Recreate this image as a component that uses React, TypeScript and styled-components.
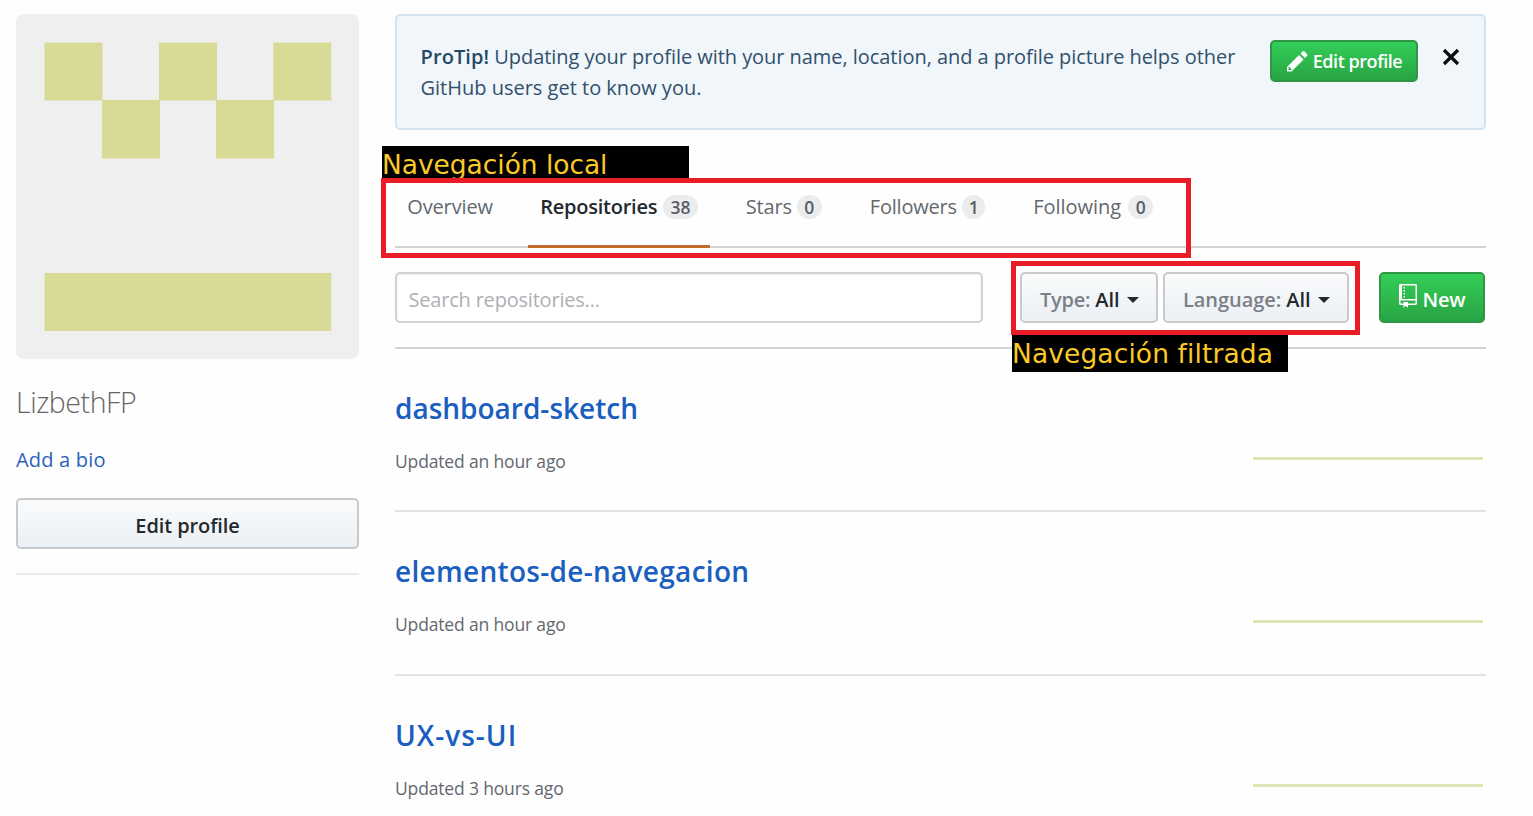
import React from "react";
import styled, { createGlobalStyle } from "styled-components";

const GlobalStyle = createGlobalStyle`
  * { box-sizing: border-box; }
  body {
    margin: 0;
    background: #fefefe;
    color: #24292e;
    font-family: "Open Sans", "Noto Sans", sans-serif;
    font-size: 20px;
    overflow: hidden;
  }
`;

const Page = styled.div`
  position: relative;
  display: flex;
  gap: 36px;
  width: 1533px;
  height: 816px;
  padding: 14px 47px 0 16px;
  overflow: hidden;
`;

const Text = styled.span<{ $track?: number }>`
  white-space: nowrap;
  letter-spacing: ${(p) => p.$track ?? 0}px;
`;

/* Sidebar */
const Sidebar = styled.aside`
  width: 343px;
  flex: none;
`;

const Avatar = styled.svg`
  display: block;
  width: 343px;
  height: 345px;
  border-radius: 8px;
  background: #efefef;
`;

const UserName = styled.h1`
  margin: 21px 0 0;
  height: 44px;
  line-height: 44px;
  font-size: 28.5px;
  font-weight: 300;
  color: #666;
`;

const BioLink = styled.a`
  display: block;
  margin-top: 20px;
  height: 32px;
  line-height: 32px;
  color: #2b62b8;
`;

const ProfileButton = styled.button`
  display: flex;
  align-items: center;
  justify-content: center;
  width: 100%;
  height: 51px;
  margin: 22px 0 24px;
  padding: 4px 0 0;
  border: 2px solid #c5c9cc;
  border-radius: 5px;
  background: linear-gradient(#fafbfc, #ebf0f4);
  font: 600 20px "Open Sans", sans-serif;
  color: #24292e;
`;

const SideRule = styled.div`
  height: 2px;
  background: #e8e9ea;
`;

/* Main column */
const Main = styled.main`
  width: 1091px;
  flex: none;
`;

const Banner = styled.section`
  display: flex;
  align-items: flex-start;
  height: 116px;
  padding: 24px 24px 0 23.5px;
  border: 2px solid #d3e3ef;
  border-radius: 5px;
  background: #f0f6fa;
  color: #32506c;
`;

const BannerCopy = styled.p`
  display: flex;
  flex-direction: column;
  width: 849.5px;
  margin: 1px 0 0;
  line-height: 31px;
`;

const Strong = styled.strong`
  font-weight: 600;
  letter-spacing: 0.1px;
  color: #264a66;
`;

const GreenButton = styled.button<{ $w: number; $h: number; $size: number; $gap: number }>`
  display: flex;
  align-items: center;
  justify-content: center;
  flex: none;
  gap: ${(p) => p.$gap}px;
  width: ${(p) => p.$w}px;
  height: ${(p) => p.$h}px;
  padding: 0;
  border: 2px solid #2f9645;
  border-radius: 5px;
  background: linear-gradient(#34ce57, #28a444);
  color: #fff;
  font: 600 ${(p) => p.$size}px "Open Sans", sans-serif;
`;

const PencilIcon = styled.svg`
  margin: 0 0 1px 1px;
`;

const RepoIcon = styled.svg`
  margin-bottom: 4px;
`;

const NewLabel = styled(Text)`
  padding-top: 3px;
`;

const CloseIcon = styled.svg`
  margin: 8px 0 0 24px;
`;

const Tabs = styled.nav`
  display: flex;
  height: 104px;
  margin-top: 14px;
  border-bottom: 2px solid #d1d3d4;
`;

const Tab = styled.a<{ $w: number; $mr?: number; $active?: boolean }>`
  display: flex;
  align-items: flex-start;
  width: ${(p) => p.$w}px;
  height: 104px;
  margin-right: ${(p) => p.$mr ?? 0}px;
  padding: 51px 0 0 12.3px;
  line-height: 24px;
  border-bottom: 3px solid ${(p) => (p.$active ? "#c2692c" : "transparent")};
  color: ${(p) => (p.$active ? "#24292e" : "#63686e")};
  font-weight: ${(p) => (p.$active ? 600 : 400)};
`;

const TabLabel = styled.span<{ $w: number; $track: number }>`
  width: ${(p) => p.$w}px;
  white-space: nowrap;
  letter-spacing: ${(p) => p.$track}px;
`;

const Counter = styled.span<{ $w: number }>`
  width: ${(p) => p.$w}px;
  height: 24px;
  border-radius: 12px;
  background: #ebecee;
  color: #595e64;
  font-size: 17.5px;
  font-weight: 600;
  text-align: center;
`;

const Filters = styled.div`
  display: flex;
  height: 101px;
  padding-top: 24px;
  border-bottom: 2px solid #d1d3d4;
`;

const SearchBox = styled.div`
  width: 588px;
  height: 51px;
  margin-right: 37px;
  padding: 0 0 0 11.5px;
  border: 2px solid #d0d2d5;
  border-radius: 5px;
  background: #fff;
  box-shadow: inset 0 1px 2px rgba(27, 31, 35, 0.08);
  line-height: 51px;
  color: #adb0b4;
`;

const SelectButton = styled.button<{ $w: number; $mr: number }>`
  display: flex;
  align-items: center;
  gap: 5px;
  width: ${(p) => p.$w}px;
  height: 51px;
  margin-right: ${(p) => p.$mr}px;
  padding: 4px 0 0 18px;
  border: 2px solid #c8cacc;
  border-radius: 5px;
  background: linear-gradient(#fafbfc, #ebf0f5);
  font: 600 20px "Open Sans", sans-serif;
  color: #24292e;
`;

const Muted = styled(Text)`
  color: #7b8086;
`;

const Caret = styled.span`
  margin-left: 2px;
  border: 6px solid transparent;
  border-top-color: #24292e;
  border-bottom: 0;
`;

const Repo = styled.article<{ $h: number }>`
  display: flex;
  justify-content: space-between;
  height: ${(p) => p.$h}px;
  padding-top: 37px;
  border-bottom: 2px solid #e2e3e4;
`;

const RepoName = styled.h2`
  margin: 0;
  height: 44px;
  line-height: 44px;
  font-size: 28px;
  font-weight: 600;
  color: #1a5fbf;
`;

const Updated = styled.div`
  margin-top: 17px;
  height: 28px;
  line-height: 28px;
  font-size: 17.5px;
  color: #63686e;
`;

const Activity = styled.div`
  width: 230px;
  height: 3px;
  margin: 71px 3px 0 0;
  background: #dce6b8;
`;

/* Annotations laid over the page */
const Frame = styled.div<{ $x: number; $y: number; $w: number; $h: number }>`
  position: absolute;
  left: ${(p) => p.$x}px;
  top: ${(p) => p.$y}px;
  width: ${(p) => p.$w}px;
  height: ${(p) => p.$h}px;
  border: 5px solid #e91d27;
`;

const Caption = styled.div<{ $x: number; $y: number; $w: number; $h: number; $track: number }>`
  position: absolute;
  left: ${(p) => p.$x}px;
  top: ${(p) => p.$y}px;
  width: ${(p) => p.$w}px;
  height: ${(p) => p.$h}px;
  line-height: 38px;
  background: #000;
  color: #fbc926;
  font-family: "DejaVu Sans", sans-serif;
  font-size: 26.5px;
  letter-spacing: ${(p) => p.$track}px;
  white-space: nowrap;
`;

const tabs = [
  { label: "Overview", w: 133, lw: 86, track: -0.15 },
  { label: "Repositories", w: 182, mr: 23.5, lw: 122.7, track: -0.25, count: "38", cw: 35, active: true },
  { label: "Stars", w: 124, lw: 51, track: -0.2, count: "0", cw: 25 },
  { label: "Followers", w: 163.5, lw: 92.5, track: -0.2, count: "1", cw: 23 },
  { label: "Following", w: 150, lw: 95, track: -0.05, count: "0", cw: 25 },
];

const repos = [
  { name: "dashboard-sketch", updated: "Updated an hour ago", h: 163, track: 0 },
  { name: "elementos-de-navegacion", updated: "Updated an hour ago", h: 164, track: 0.3 },
  { name: "UX-vs-UI", updated: "Updated 3 hours ago", h: 164, track: 1 },
];

const cells = [
  [28.5, 28.5, 58, 58],
  [143, 28.5, 58, 58],
  [257.3, 28.5, 58, 58],
  [86, 86, 58, 58.5],
  [200, 86, 58, 58.5],
  [28.5, 259, 286.8, 58],
];

export default function App() {
  return (
    <Page>
      <GlobalStyle />
      <Sidebar>
        <Avatar viewBox="0 0 343 345">
          {cells.map(([x, y, w, h]) => (
            <rect key={`${x}-${y}`} x={x} y={y} width={w} height={h} fill="#d8db96" />
          ))}
        </Avatar>
        <UserName><Text $track={-0.45}>LizbethFP</Text></UserName>
        <BioLink><Text $track={0.2}>Add a bio</Text></BioLink>
        <ProfileButton><Text $track={-0.1}>Edit profile</Text></ProfileButton>
        <SideRule />
      </Sidebar>

      <Main>
        <Banner>
          <BannerCopy>
            <Text $track={-0.05}>
              <Strong>ProTip!</Strong> Updating your profile with your name, location, and a profile picture helps other
            </Text>
            <Text>GitHub users get to know you.</Text>
          </BannerCopy>
          <GreenButton $w={148} $h={42} $size={18} $gap={5}>
            <PencilIcon width="21" height="24" viewBox="0 0 14 16" fill="#fff">
              <path d="M0 12v3h3l8-8-3-3L0 12zm3 2H1v-2h1v1h1v1zm10.3-9.3L12 6 9 3l1.3-1.3a.996.996 0 0 1 1.41 0l1.59 1.59c.39.39.39 1.02 0 1.41z" />
            </PencilIcon>
            <Text $track={-0.45}>Edit profile</Text>
          </GreenButton>
          <CloseIcon width="18" height="18" viewBox="0 0 18 18" stroke="#0b0c0d" strokeWidth="3.2">
            <path d="M2 2l14 14M16 2L2 16" />
          </CloseIcon>
        </Banner>

        <Tabs>
          {tabs.map((t) => (
            <Tab key={t.label} $w={t.w} $mr={t.mr} $active={t.active}>
              <TabLabel $w={t.lw} $track={t.track}>{t.label}</TabLabel>
              {t.count && <Counter $w={t.cw}>{t.count}</Counter>}
            </Tab>
          ))}
        </Tabs>

        <Filters>
          <SearchBox><Text $track={-0.2}>Search repositories…</Text></SearchBox>
          <SelectButton $w={138} $mr={5}>
            <Muted $track={-0.25}>Type:</Muted>
            <Text>All</Text>
            <Caret />
          </SelectButton>
          <SelectButton $w={186} $mr={30}>
            <Muted $track={-0.05}>Language:</Muted>
            <Text>All</Text>
            <Caret />
          </SelectButton>
          <GreenButton $w={106} $h={51} $size={20} $gap={6}>
            <RepoIcon width="18" height="24" viewBox="0 0 12 16" fill="#fff">
              <path d="M4 9H3V8h1v1zm0-3H3v1h1V6zm0-2H3v1h1V4zm0-2H3v1h1V2zm8-1v12c0 .55-.45 1-1 1H6v2l-1.500-1.500L3 16v-2H1c-.55 0-1-.45-1-1V1c0-.55.45-1 1-1h10c.55 0 1 .45 1 1zm-1 10H1v2h2v-1h3v1h5v-2zm0-10H2v9h9V1z" />
            </RepoIcon>
            <NewLabel $track={-0.2}>New</NewLabel>
          </GreenButton>
        </Filters>

        {repos.map((r) => (
          <Repo key={r.name} $h={r.h}>
            <div>
              <RepoName><Text $track={r.track}>{r.name}</Text></RepoName>
              <Updated><Text $track={-0.16}>{r.updated}</Text></Updated>
            </div>
            <Activity />
          </Repo>
        ))}
      </Main>

      <Caption $x={382} $y={146} $w={307} $h={33} $track={-0.05}>Navegación local</Caption>
      <Frame $x={381} $y={178} $w={810} $h={80} />
      <Caption $x={1012} $y={335} $w={276} $h={37} $track={0.1}>Navegación filtrada</Caption>
      <Frame $x={1011} $y={261} $w={349} $h={74} />
    </Page>
  );
}
